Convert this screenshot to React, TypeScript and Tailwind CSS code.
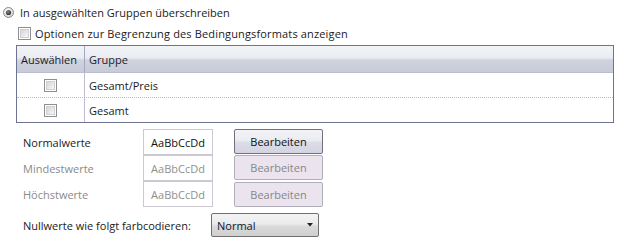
import React from "react";

function Radio() {
  return (
    <svg width="11" height="11" viewBox="0 0 11 11" className="shrink-0">
      <defs>
        <radialGradient id="rg" cx="0.4" cy="0.35" r="0.7">
          <stop offset="0%" stopColor="#ffffff" />
          <stop offset="100%" stopColor="#cfcfcf" />
        </radialGradient>
        <radialGradient id="rd" cx="0.4" cy="0.35" r="0.7">
          <stop offset="0%" stopColor="#8a8a8a" />
          <stop offset="100%" stopColor="#2a2a2a" />
        </radialGradient>
      </defs>
      <circle cx="5.5" cy="5.5" r="5" fill="url(#rg)" stroke="#8c8c8c" strokeWidth="1" />
      <circle cx="5.5" cy="5.5" r="2.6" fill="url(#rd)" />
    </svg>
  );
}

function Check() {
  return (
    <div className="w-[13px] h-[13px] shrink-0 border border-[#8e8f8f] bg-white p-[1px]">
      <div className="w-full h-full bg-gradient-to-br from-[#d6d6d8] to-[#f6f6f8] border border-[#cfcfd4]" />
    </div>
  );
}

export default function App() {
  return (
    <div
      className="w-[629px] h-[244px] bg-white text-[11px] leading-none text-[#1b1b1b] overflow-hidden"
      style={{ fontFamily: '"Open Sans", "Noto Sans", sans-serif' }}
    >
      {/* radio row */}
      <div className="flex items-center h-[11px] mt-[7px] pl-[3px] gap-[6px]">
        <Radio />
        <span>In ausgewählten Gruppen überschreiben</span>
      </div>
      {/* checkbox row */}
      <div className="flex items-center h-[13px] mt-[9px] pl-[18px] gap-[4px]">
        <Check />
        <span className="tracking-[0.15px]">Optionen zur Begrenzung des Bedingungsformats anzeigen</span>
      </div>
      {/* table */}
      <div className="ml-[16px] mt-[5px] w-[598px] border border-[#6d7491]">
        <div className="flex h-[27px] border-b border-[#b9bdcc] bg-[linear-gradient(to_bottom,#f3f4f8_0%,#eaecf2_45%,#d0d3de_55%,#c7cbd8_100%)]">
          <div className="w-[68px] flex items-center pl-[4px] border-r border-[#a4a8bf] text-[#1a1c2c]">
            Auswählen
          </div>
          <div className="flex-1 flex items-center pl-[4px] text-[#1a1c2c]">Gruppe</div>
        </div>
        <div className="flex h-[25px] border-b border-dotted border-[#bdb6cc]">
          <div className="w-[68px] flex items-center justify-center border-r border-[#c2bcd2]">
            <Check />
          </div>
          <div className="flex-1 flex items-center pl-[4px]">Gesamt/Preis</div>
        </div>
        <div className="flex h-[24px]">
          <div className="w-[68px] flex items-center justify-center border-r border-[#c2bcd2]">
            <Check />
          </div>
          <div className="flex-1 flex items-center pl-[4px]">Gesamt</div>
        </div>
      </div>
      {/* values */}
      <div className="mt-[6px] ml-[23px] grid grid-cols-[99px_70px_89px] gap-x-[21px] auto-rows-[26px]">
        <div className="flex items-center">Normalwerte</div>
        <div className="h-[26px] border border-[#cdc8d2] bg-white flex items-center justify-center text-[#111]">
          AaBbCcDd
        </div>
        <div className="h-[25px] border border-[#6f7080] rounded-[2px] flex items-center justify-center bg-[linear-gradient(to_bottom,#f3f3f7_0%,#ebebf2_45%,#dcdce8_55%,#d3d3e2_100%)] text-[#111]">
          Bearbeiten
        </div>

        <div className="flex items-center text-[#8a8a8a]">Mindestwerte</div>
        <div className="h-[26px] border border-[#cdc8d2] bg-white flex items-center justify-center text-[#8f8f8f]">
          AaBbCcDd
        </div>
        <div className="h-[25px] border border-[#b0aeb8] rounded-[2px] flex items-center justify-center bg-[#ebe4ee] text-[#878787]">
          Bearbeiten
        </div>

        <div className="flex items-center text-[#8a8a8a]">Höchstwerte</div>
        <div className="h-[26px] border border-[#cdc8d2] bg-white flex items-center justify-center text-[#8f8f8f]">
          AaBbCcDd
        </div>
        <div className="h-[25px] mt-[1px] border border-[#b0aeb8] rounded-[2px] flex items-center justify-center bg-[#ebe4ee] text-[#878787]">
          Bearbeiten
        </div>
      </div>
      {/* bottom row */}
      <div className="mt-[6px] ml-[23px] flex items-center h-[24px]">
        <span className="w-[188px]">Nullwerte wie folgt farbcodieren:</span>
        <div className="relative w-[108px] h-[24px] border border-[#707070] rounded-[2px] bg-[linear-gradient(to_bottom,#f4f4f4_0%,#ebebeb_45%,#dadada_55%,#cfcfcf_100%)] flex items-center pl-[5px] text-[#0f1530]">
          Normal
          <svg width="6" height="4" viewBox="0 0 6 4" className="absolute right-[5px] top-[9px]">
            <path d="M0 0 L6 0 L3 3.5 Z" fill="#222" />
          </svg>
        </div>
      </div>
    </div>
  );
}
